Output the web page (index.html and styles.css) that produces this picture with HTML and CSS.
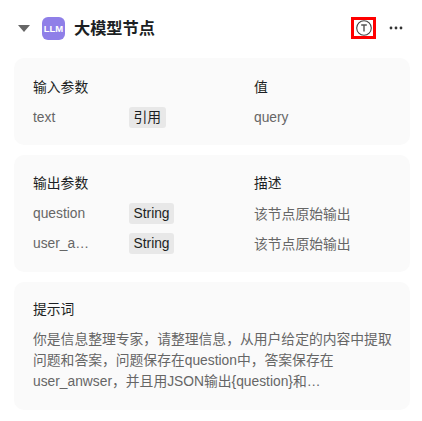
FILE: index.html
```html
<!DOCTYPE html>
<html>
<head>
  <title>大模型节点</title>
  <link rel="stylesheet" href="styles.css">
</head>
<body>
  <div class="node">
    <div class="node-header">
      <span class="caret"></span>
      <span class="llm-icon">LLM</span>
      <span class="node-title">大模型节点</span>
      <span class="trace-btn">
        <svg width="16" height="16" viewBox="0 0 16 16">
          <circle cx="8" cy="8" r="7.3" fill="none" stroke="#444" stroke-width="1.1"/>
          <path d="M5.2 5h5.6M8 5v6.6" fill="none" stroke="#555" stroke-width="1.4"/>
        </svg>
      </span>
      <span class="more-btn">
        <svg width="14" height="4" viewBox="0 0 14 4">
          <circle cx="2" cy="2" r="1.4" fill="#333"/>
          <circle cx="7" cy="2" r="1.4" fill="#333"/>
          <circle cx="12" cy="2" r="1.4" fill="#333"/>
        </svg>
      </span>
    </div>

    <div class="card card-input">
      <div class="row head">
        <div class="col-name">输入参数</div>
        <div class="col-type"></div>
        <div class="col-value">值</div>
      </div>
      <div class="row">
        <div class="col-name muted">text</div>
        <div class="col-type"><span class="tag">引用</span></div>
        <div class="col-value muted">query</div>
      </div>
    </div>

    <div class="card card-output">
      <div class="row head">
        <div class="col-name">输出参数</div>
        <div class="col-type"></div>
        <div class="col-value">描述</div>
      </div>
      <div class="row">
        <div class="col-name muted">question</div>
        <div class="col-type"><span class="tag">String</span></div>
        <div class="col-value muted">该节点原始输出</div>
      </div>
      <div class="row">
        <div class="col-name muted">user_a…</div>
        <div class="col-type"><span class="tag">String</span></div>
        <div class="col-value muted">该节点原始输出</div>
      </div>
    </div>

    <div class="card card-prompt">
      <div class="prompt-title">提示词</div>
      <div class="prompt-text">你是信息整理专家，请整理信息，从用户给定的内容中提取问题和答案，问题保存在question中，答案保存在user_anwser，并且用JSON输出{question}和…</div>
    </div>
  </div>
</body>
</html>
```

FILE: styles.css
```css
body {
  margin: 0;
  background-color: white;
  font-family: "Liberation Sans", "Noto Sans CJK SC", sans-serif;
  font-size: 13.8px;
  color: #1c1f23;
}

.node {
  width: 396px;
  padding: 0 12px 0 14px;
}

.node-header {
  display: flex;
  align-items: center;
  height: 56px;
  padding-right: 6px;
  padding-bottom: 2px;
}

.caret {
  width: 0;
  height: 0;
  margin: 1px 0 0 4px;
  border-left: 6px solid transparent;
  border-right: 6px solid transparent;
  border-top: 7px solid #666;
}

.llm-icon {
  display: flex;
  align-items: center;
  justify-content: center;
  width: 23px;
  height: 23px;
  margin: 1px 0 0 12px;
  border-radius: 6px;
  background-color: #8f7fe8;
  color: white;
  font-size: 9.5px;
  font-weight: bold;
}

.node-title {
  margin-left: 9px;
  padding-bottom: 2px;
  font-size: 16.2px;
  font-weight: bold;
  flex: 1;
}

.trace-btn {
  display: flex;
  align-items: center;
  justify-content: center;
  width: 19px;
  height: 16px;
  border: 3px solid #f00;
}

.more-btn {
  display: flex;
  align-items: center;
  margin: 0 1px 0 13px;
}

.card {
  background-color: #fafafa;
  border-radius: 10px;
  padding: 17px 18px 0 19px;
}

.card-input {
  height: 70px;
  margin-bottom: 10px;
}

.card-output {
  height: 101px;
  padding-top: 16px;
  margin-bottom: 10px;
}

.card-prompt {
  height: 111px;
}

.row {
  display: flex;
  align-items: center;
  height: 30px;
}

.row.head {
  height: 22px;
  margin-bottom: 5px;
}

.col-name {
  width: 96px;
}

.col-type {
  width: 125px;
}

.muted {
  color: #666;
}

.tag {
  display: inline-block;
  padding: 0 4.5px;
  line-height: 21px;
  border-radius: 3px;
  background-color: #e8e8e8;
}

.prompt-title {
  margin-bottom: 8px;
  line-height: 22px;
}

.prompt-text {
  width: 362px;
  line-height: 21px;
  color: #666;
}
```
